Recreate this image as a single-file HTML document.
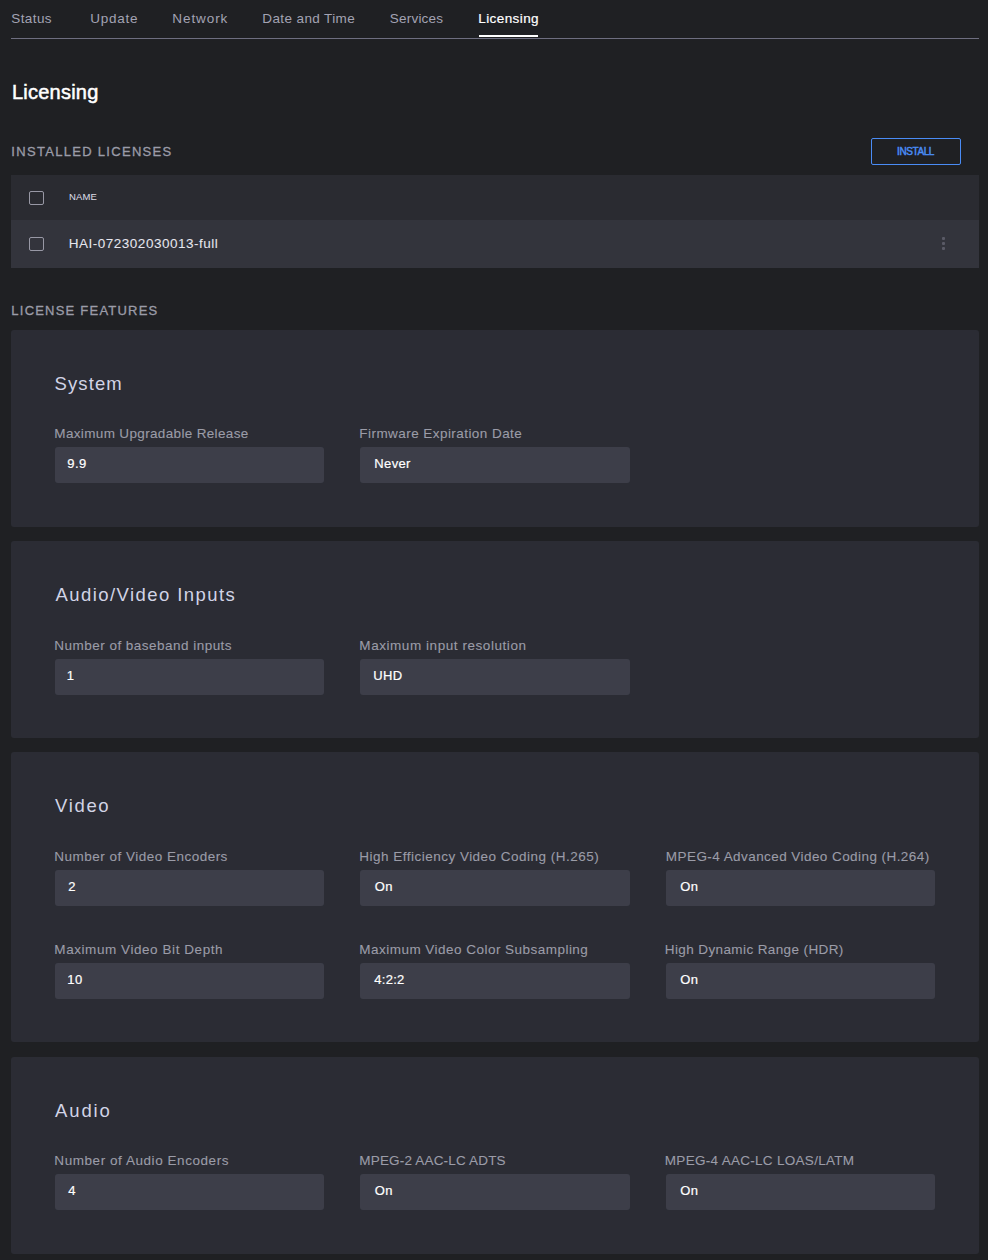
<!DOCTYPE html>
<html><head><meta charset="utf-8">
<style>
html,body{margin:0;padding:0;}
body{width:988px;height:1260px;overflow:hidden;background:#1f2023;font-family:"Liberation Sans",sans-serif;position:relative;}
.t{position:absolute;white-space:nowrap;line-height:20px;height:20px;}
.tabline{position:absolute;left:11px;top:38px;width:968px;height:1px;background:#6e6e80;}
.tabul{position:absolute;left:479px;top:35px;width:59px;height:2px;background:#ffffff;}
.btn{position:absolute;left:871px;top:138px;width:88px;height:25px;border:1px solid #4a8cf5;border-radius:2px;}
.thead{position:absolute;left:11px;top:175px;width:968px;height:45px;background:#2a2b31;}
.trow{position:absolute;left:11px;top:220px;width:968px;height:48px;background:#33343c;}
.cb{position:absolute;left:29px;box-sizing:border-box;width:15px;height:14px;border:1.3px solid #9898a5;border-radius:2px;}
.dot{position:absolute;left:942px;width:3px;height:3px;background:#5a5a66;border-radius:1px;}
.card{position:absolute;left:11px;width:968px;background:#2b2c34;border-radius:3px;}
.inp{position:absolute;height:36px;background:#3d3e49;border-radius:3px;}
</style></head>
<body>
<div class="tabul"></div><div class="tabline"></div>
<div class="btn"></div>
<div class="thead"></div><div class="trow"></div>
<div class="cb" style="top:191px"></div><div class="cb" style="top:237px"></div>
<div class="dot" style="top:237px"></div>
<div class="dot" style="top:242px"></div>
<div class="dot" style="top:247px"></div>
<div class="card" style="top:330px;height:197px"></div>
<div class="card" style="top:541px;height:197px"></div>
<div class="card" style="top:752px;height:290px"></div>
<div class="card" style="top:1057px;height:197px"></div>
<div class="inp" style="left:55px;top:447px;width:269px"></div>
<div class="inp" style="left:360px;top:447px;width:270px"></div>
<div class="inp" style="left:55px;top:659px;width:269px"></div>
<div class="inp" style="left:360px;top:659px;width:270px"></div>
<div class="inp" style="left:55px;top:870px;width:269px"></div>
<div class="inp" style="left:360px;top:870px;width:270px"></div>
<div class="inp" style="left:666px;top:870px;width:269px"></div>
<div class="inp" style="left:55px;top:963px;width:269px"></div>
<div class="inp" style="left:360px;top:963px;width:270px"></div>
<div class="inp" style="left:666px;top:963px;width:269px"></div>
<div class="inp" style="left:55px;top:1174px;width:269px"></div>
<div class="inp" style="left:360px;top:1174px;width:270px"></div>
<div class="inp" style="left:666px;top:1174px;width:269px"></div>
<div class="t" id="t_status" style="left:11.32px;top:9.00px;font-size:13.5px;letter-spacing:0.390px;color:#a3a3b3;">Status</div>
<div class="t" id="t_update" style="left:90.33px;top:9.00px;font-size:13.5px;letter-spacing:0.750px;color:#a3a3b3;">Update</div>
<div class="t" id="t_network" style="left:172.32px;top:9.00px;font-size:13.5px;letter-spacing:0.917px;color:#a3a3b3;">Network</div>
<div class="t" id="t_date" style="left:262.32px;top:9.00px;font-size:13.5px;letter-spacing:0.384px;color:#a3a3b3;">Date and Time</div>
<div class="t" id="t_services" style="left:389.82px;top:9.00px;font-size:13.5px;letter-spacing:0.206px;color:#a3a3b3;">Services</div>
<div class="t" id="t_lic" style="left:478.32px;top:9.00px;font-size:13.5px;letter-spacing:0.400px;color:#ffffff;-webkit-text-stroke:0.2px #ffffff;">Licensing</div>
<div class="t" id="h1" style="left:12.00px;top:82.20px;font-size:20px;letter-spacing:0.225px;color:#ffffff;-webkit-text-stroke:0.5px #ffffff;">Licensing</div>
<div class="t" id="sec1" style="left:11.35px;top:142.00px;font-size:13px;letter-spacing:1.300px;color:#9b9ca8;-webkit-text-stroke:0.3px #9b9ca8;">INSTALLED LICENSES</div>
<div class="t" id="btn" style="left:897.00px;top:142.30px;font-size:10px;letter-spacing:-0.400px;color:#4a8cf5;-webkit-text-stroke:0.45px #4a8cf5;">INSTALL</div>
<div class="t" id="nameh" style="left:69.03px;top:187.10px;font-size:9.5px;letter-spacing:0.100px;color:#dcdce6;-webkit-text-stroke:0.05px #dcdce6;">NAME</div>
<div class="t" id="row1" style="left:68.83px;top:233.80px;font-size:13.5px;letter-spacing:0.500px;color:#e6e6ee;-webkit-text-stroke:0.05px #e6e6ee;">HAI-072302030013-full</div>
<div class="t" id="sec2" style="left:11.35px;top:301.00px;font-size:13px;letter-spacing:1.220px;color:#9b9ca8;-webkit-text-stroke:0.3px #9b9ca8;">LICENSE FEATURES</div>
<div class="t" id="ttl0" style="left:54.58px;top:374.30px;font-size:18.5px;letter-spacing:1.090px;color:#d2d4e6;">System</div>
<div class="t" id="ttl1" style="left:55.58px;top:585.30px;font-size:18.5px;letter-spacing:1.426px;color:#d2d4e6;">Audio/Video Inputs</div>
<div class="t" id="ttl2" style="left:55.08px;top:796.30px;font-size:18.5px;letter-spacing:1.650px;color:#d2d4e6;">Video</div>
<div class="t" id="ttl3" style="left:55.08px;top:1101.30px;font-size:18.5px;letter-spacing:1.850px;color:#d2d4e6;">Audio</div>
<div class="t" id="lbl_0_0_0" style="left:54.33px;top:423.80px;font-size:13.5px;letter-spacing:0.344px;color:#9b9ca8;-webkit-text-stroke:0.1px #9b9ca8;">Maximum Upgradable Release</div>
<div class="t" id="val_0_0_0" style="left:67.35px;top:454.00px;font-size:13px;letter-spacing:0.350px;color:#ffffff;-webkit-text-stroke:0.2px #ffffff;">9.9</div>
<div class="t" id="lbl_0_0_1" style="left:359.33px;top:423.80px;font-size:13.5px;letter-spacing:0.443px;color:#9b9ca8;-webkit-text-stroke:0.1px #9b9ca8;">Firmware Expiration Date</div>
<div class="t" id="val_0_0_1" style="left:374.35px;top:454.00px;font-size:13px;letter-spacing:0.350px;color:#ffffff;-webkit-text-stroke:0.2px #ffffff;">Never</div>
<div class="t" id="lbl_1_0_0" style="left:54.33px;top:635.80px;font-size:13.5px;letter-spacing:0.475px;color:#9b9ca8;-webkit-text-stroke:0.1px #9b9ca8;">Number of baseband inputs</div>
<div class="t" id="val_1_0_0" style="left:66.85px;top:666.00px;font-size:13px;letter-spacing:0.350px;color:#ffffff;-webkit-text-stroke:0.2px #ffffff;">1</div>
<div class="t" id="lbl_1_0_1" style="left:359.33px;top:635.80px;font-size:13.5px;letter-spacing:0.557px;color:#9b9ca8;-webkit-text-stroke:0.1px #9b9ca8;">Maximum input resolution</div>
<div class="t" id="val_1_0_1" style="left:373.35px;top:666.00px;font-size:13px;letter-spacing:0.350px;color:#ffffff;-webkit-text-stroke:0.2px #ffffff;">UHD</div>
<div class="t" id="lbl_2_0_0" style="left:54.33px;top:846.80px;font-size:13.5px;letter-spacing:0.487px;color:#9b9ca8;-webkit-text-stroke:0.1px #9b9ca8;">Number of Video Encoders</div>
<div class="t" id="val_2_0_0" style="left:68.35px;top:877.00px;font-size:13px;letter-spacing:0.350px;color:#ffffff;-webkit-text-stroke:0.2px #ffffff;">2</div>
<div class="t" id="lbl_2_0_1" style="left:359.33px;top:846.80px;font-size:13.5px;letter-spacing:0.485px;color:#9b9ca8;-webkit-text-stroke:0.1px #9b9ca8;">High Efficiency Video Coding (H.265)</div>
<div class="t" id="val_2_0_1" style="left:374.85px;top:877.00px;font-size:13px;letter-spacing:0.350px;color:#ffffff;-webkit-text-stroke:0.2px #ffffff;">On</div>
<div class="t" id="lbl_2_0_2" style="left:665.83px;top:846.80px;font-size:13.5px;letter-spacing:0.435px;color:#9b9ca8;-webkit-text-stroke:0.1px #9b9ca8;">MPEG-4 Advanced Video Coding (H.264)</div>
<div class="t" id="val_2_0_2" style="left:680.35px;top:877.00px;font-size:13px;letter-spacing:0.350px;color:#ffffff;-webkit-text-stroke:0.2px #ffffff;">On</div>
<div class="t" id="lbl_2_1_0" style="left:54.33px;top:939.80px;font-size:13.5px;letter-spacing:0.564px;color:#9b9ca8;-webkit-text-stroke:0.1px #9b9ca8;">Maximum Video Bit Depth</div>
<div class="t" id="val_2_1_0" style="left:67.35px;top:970.00px;font-size:13px;letter-spacing:0.350px;color:#ffffff;-webkit-text-stroke:0.2px #ffffff;">10</div>
<div class="t" id="lbl_2_1_1" style="left:359.33px;top:939.80px;font-size:13.5px;letter-spacing:0.473px;color:#9b9ca8;-webkit-text-stroke:0.1px #9b9ca8;">Maximum Video Color Subsampling</div>
<div class="t" id="val_2_1_1" style="left:374.35px;top:970.00px;font-size:13px;letter-spacing:0.250px;color:#ffffff;-webkit-text-stroke:0.2px #ffffff;">4:2:2</div>
<div class="t" id="lbl_2_1_2" style="left:664.83px;top:939.80px;font-size:13.5px;letter-spacing:0.390px;color:#9b9ca8;-webkit-text-stroke:0.1px #9b9ca8;">High Dynamic Range (HDR)</div>
<div class="t" id="val_2_1_2" style="left:680.35px;top:970.00px;font-size:13px;letter-spacing:0.350px;color:#ffffff;-webkit-text-stroke:0.2px #ffffff;">On</div>
<div class="t" id="lbl_3_0_0" style="left:54.33px;top:1150.80px;font-size:13.5px;letter-spacing:0.556px;color:#9b9ca8;-webkit-text-stroke:0.1px #9b9ca8;">Number of Audio Encoders</div>
<div class="t" id="val_3_0_0" style="left:68.35px;top:1181.00px;font-size:13px;letter-spacing:0.350px;color:#ffffff;-webkit-text-stroke:0.2px #ffffff;">4</div>
<div class="t" id="lbl_3_0_1" style="left:359.33px;top:1150.80px;font-size:13.5px;letter-spacing:0.177px;color:#9b9ca8;-webkit-text-stroke:0.1px #9b9ca8;">MPEG-2 AAC-LC ADTS</div>
<div class="t" id="val_3_0_1" style="left:374.85px;top:1181.00px;font-size:13px;letter-spacing:0.350px;color:#ffffff;-webkit-text-stroke:0.2px #ffffff;">On</div>
<div class="t" id="lbl_3_0_2" style="left:664.83px;top:1150.80px;font-size:13.5px;letter-spacing:0.292px;color:#9b9ca8;-webkit-text-stroke:0.1px #9b9ca8;">MPEG-4 AAC-LC LOAS/LATM</div>
<div class="t" id="val_3_0_2" style="left:680.35px;top:1181.00px;font-size:13px;letter-spacing:0.350px;color:#ffffff;-webkit-text-stroke:0.2px #ffffff;">On</div>
</body></html>
